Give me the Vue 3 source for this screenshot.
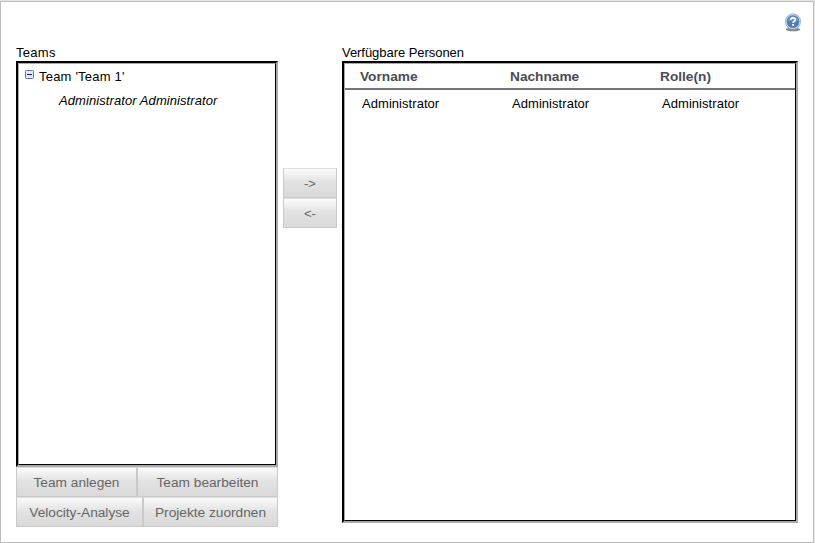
<script setup>
const columns = ['Vorname', 'Nachname', 'Rolle(n)']
const people = [['Administrator', 'Administrator', 'Administrator']]
</script>

<template>
  <main class="panel">
    <header class="toolbar">
      <svg class="help" width="18" height="20" viewBox="0 0 18 20" role="img">
        <ellipse cx="9" cy="16.4" rx="7.2" ry="1.8" fill="#858585" />
        <circle cx="9" cy="8.6" r="8" fill="#8fb0d6" />
        <circle cx="9" cy="8.6" r="6.8" fill="#4e7db8" stroke="#dce9f5" stroke-width=".8" />
        <path d="M3.4 8.5a5.6 5.6 0 0 1 11.2 0z" fill="#668fc2" />
        <path d="M6.7 6.9C6.7 4.2 11.3 4.2 11.3 6.7C11.3 8.2 9.1 8.3 9.1 10" fill="none" stroke="#fff" stroke-width="1.7" />
        <rect x="8.1" y="11" width="1.9" height="1.8" fill="#fff" />
      </svg>
    </header>
    <div class="content">
      <section class="teams">
        <div class="label teams-label">Teams</div>
        <div class="frame teams-frame">
          <div class="inner">
            <div class="node">
              <svg width="9" height="9" viewBox="0 0 9 9">
                <rect x=".5" y=".5" width="8" height="8" rx="1" fill="#e4e8fb" stroke="#6573b0" />
                <path d="M2 4.5h5" stroke="#151a78" />
              </svg>
              <span>Team 'Team 1'</span>
            </div>
            <div class="member">Administrator Administrator</div>
          </div>
        </div>
        <div class="actions">
          <div class="row first"><button>Team anlegen</button><button>Team bearbeiten</button></div>
          <div class="row second"><button>Velocity-Analyse</button><button>Projekte zuordnen</button></div>
        </div>
      </section>
      <div class="transfer">
        <button>-&gt;</button>
        <button>&lt;-</button>
      </div>
      <section class="people">
        <div class="label">Verfügbare Personen</div>
        <div class="frame people-frame">
          <div class="inner">
            <div class="grid head"><span v-for="c in columns" :key="c">{{ c }}</span></div>
            <div v-for="(p, i) in people" :key="i" class="grid body"><span v-for="(v, j) in p" :key="j">{{ v }}</span></div>
          </div>
        </div>
      </section>
    </div>
  </main>
</template>

<style>
body { background: #e6e6e6; }
</style>

<style scoped>
.panel {
  box-sizing: border-box;
  width: 814px;
  height: 542px;
  margin-top: 1px;
  border: 1px solid #bdbdbd;
  background: #fff;
  color: #000;
  font: 13px/16px "Liberation Sans", Arial, sans-serif;
}
.toolbar {
  display: flex;
  justify-content: flex-end;
  height: 43px;
  box-sizing: border-box;
  padding: 11px 11px 0 0;
}
.content { display: flex; padding-left: 15px; }
.teams { width: 262px; }
.people { width: 456px; }
.label { height: 16px; white-space: nowrap; letter-spacing: -.05px; }
.teams-label { letter-spacing: .3px; }
.frame {
  box-sizing: border-box;
  border: 2px solid;
  border-color: #000 #aaa #aaa #000;
}
.inner {
  box-sizing: border-box;
  height: 100%;
  border: 1px solid;
  border-color: #aaa #000 #000 #aaa;
}
.teams-frame { height: 406px; }
.people-frame { height: 462px; }
.node { display: flex; gap: 5px; padding: 5px 0 0 6px; letter-spacing: .2px; }
.node svg { margin-top: 1px; }
.member { padding: 8px 0 0 40px; font-style: italic; letter-spacing: .08px; }
.row { display: grid; }
.first { grid-template-columns: 121px 141px; }
.second { grid-template-columns: 127px 135px; }
button {
  box-sizing: border-box;
  height: 30px;
  margin: 0;
  padding: 1px 0 0;
  border: 1px solid #c9c9c9;
  border-top-color: #dedede;
  border-radius: 0;
  background: linear-gradient(#fbfbfb 0%, #e3e3e3 45%, #d9d9d9 100%);
  color: #666;
  font: 13.7px/16px "Liberation Sans", Arial, sans-serif;
  white-space: nowrap;
}
.transfer {
  display: flex;
  flex-direction: column;
  width: 54px;
  padding: 123px 5px 0;
}
.transfer button { font-size: 13px; }
.grid { display: grid; grid-template-columns: 150px 150px 1fr; }
.head {
  box-sizing: border-box;
  height: 26px;
  padding: 5px 0 0 15px;
  border-bottom: 2px solid #74747a;
  color: #4b4b57;
  font-size: 13.7px;
  font-weight: bold;
}
.body { padding: 6px 0 0 17px; letter-spacing: .05px; }
</style>
